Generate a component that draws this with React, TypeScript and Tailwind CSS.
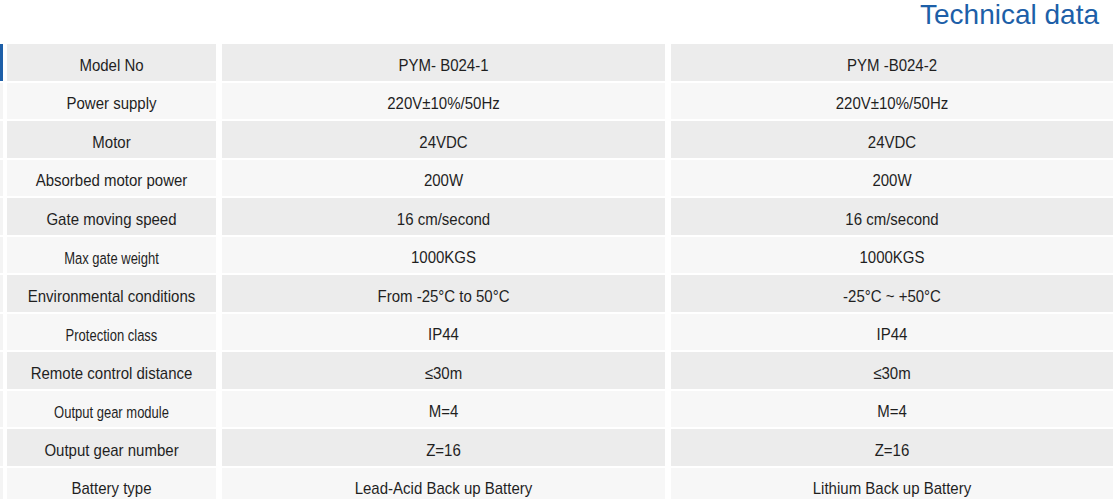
import { FC } from "react"

interface Row {
    label: string
    a: string
    b: string
    small?: boolean
}

const rows: Row[] = [
    { label: "Model No", a: "PYM- B024-1", b: "PYM -B024-2" },
    { label: "Power supply", a: "220V±10%/50Hz", b: "220V±10%/50Hz" },
    { label: "Motor", a: "24VDC", b: "24VDC" },
    { label: "Absorbed motor power", a: "200W", b: "200W" },
    { label: "Gate moving speed", a: "16 cm/second", b: "16 cm/second" },
    { label: "Max gate weight", a: "1000KGS", b: "1000KGS", small: true },
    { label: "Environmental conditions", a: "From -25°C to 50°C", b: "-25°C ~ +50°C" },
    { label: "Protection class", a: "IP44", b: "IP44", small: true },
    { label: "Remote control distance", a: "≤30m", b: "≤30m" },
    { label: "Output gear module", a: "M=4", b: "M=4", small: true },
    { label: "Output gear number", a: "Z=16", b: "Z=16" },
    { label: "Battery type", a: "Lead-Acid Back up Battery", b: "Lithium Back up Battery" },
]

const Cell: FC<{ text: string; small?: boolean }> = ({ text, small }) => (
    <span className={`inline-block pt-[5px] ${small ? "text-[13px] scale-y-[1.3]" : "text-[15px] scale-y-[1.12]"}`}>{text}</span>
)

const TechTable: FC = () => {
    return (
        <div className="flex flex-col gap-[2px]">
            {rows.map((row, i) => {
                const bg = i % 2 === 0 ? "bg-[#ececec]" : "bg-[#f7f7f7]"
                return (
                    <div key={row.label} className="flex h-[36.5px]">
                        <div className={`w-[3px] ${i === 0 ? "bg-[#1d5fa8]" : "bg-[#f4f4f4]"}`}></div>
                        <div className="w-[4px] bg-white"></div>
                        <div className={`w-[209px] flex items-center justify-center ${bg}`}>
                            <Cell text={row.label} small={row.small} />
                        </div>
                        <div className="w-[6px] bg-white"></div>
                        <div className={`w-[443px] flex items-center justify-center ${bg}`}>
                            <Cell text={row.a} />
                        </div>
                        <div className="w-[6px] bg-white"></div>
                        <div className={`flex-1 flex items-center justify-center ${bg}`}>
                            <Cell text={row.b} />
                        </div>
                    </div>
                )
            })}
        </div>
    )
}

export default function App() {
    return (
        <div className="w-[1113px] h-[499px] overflow-hidden bg-white text-[#1f1f1f]" style={{ fontFamily: '"Liberation Sans", Arial, sans-serif' }}>
            <div className="h-[44px] flex justify-end items-start pr-[14px]">
                <span className="text-[28px] leading-[30px] text-[#1d5fa8]">Technical data</span>
            </div>
            <TechTable />
        </div>
    )
}
